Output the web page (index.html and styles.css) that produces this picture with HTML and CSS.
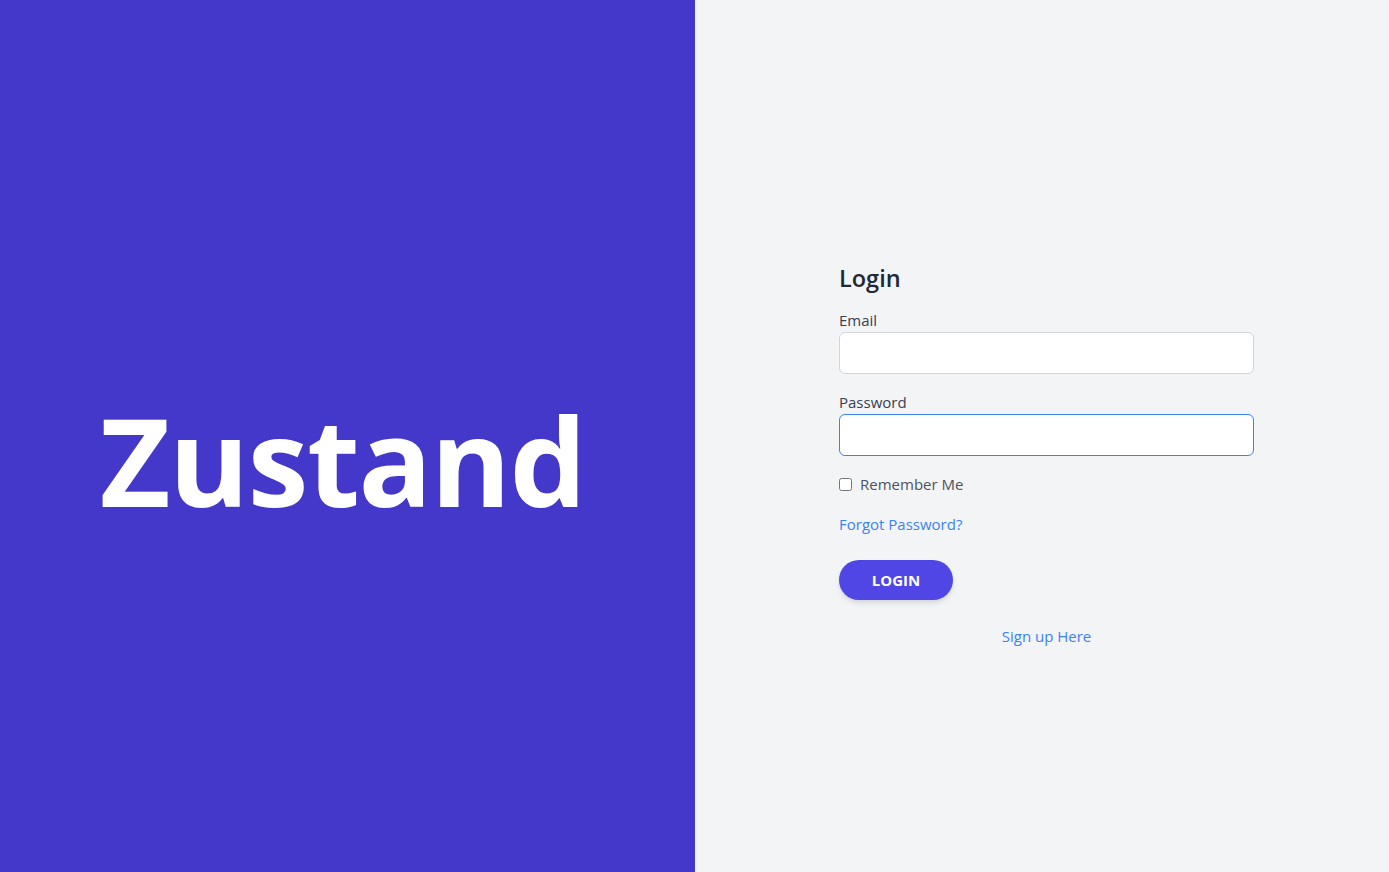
FILE: index.html
```html
<!DOCTYPE html>
<html lang="en">
<head>
<meta charset="utf-8">
<title>Zustand Login</title>
<link rel="stylesheet" href="styles.css">
</head>
<body>
<div class="page">
  <section class="brand">
    <h1 class="brand-title">Zustand</h1>
  </section>
  <section class="auth">
    <form class="login-form" onsubmit="return false">
      <h2 class="login-title">Login</h2>
      <div class="field">
        <label class="field-label" for="email">Email</label>
        <input class="field-input" id="email" type="email">
      </div>
      <div class="field">
        <label class="field-label" for="password">Password</label>
        <input class="field-input field-input--focus" id="password" type="password">
      </div>
      <label class="remember">
        <input class="remember-box" type="checkbox">
        <span>Remember Me</span>
      </label>
      <a class="link forgot" href="#">Forgot Password?</a>
      <button class="login-btn" type="submit">LOGIN</button>
      <div class="signup"><a class="link" href="#">Sign up Here</a></div>
    </form>
  </section>
</div>
</body>
</html>
```

FILE: styles.css
```css
* { box-sizing: border-box; }
html, body { margin: 0; padding: 0; height: 100%; }
body {
  font-family: "Open Sans", "Noto Sans", sans-serif;
  font-size: 15px;
  line-height: 24px;
}
.page {
  display: flex;
  height: 872px;
}
.brand {
  width: 695px;
  flex: none;
  background: #4338ca;
  display: flex;
  align-items: center;
  justify-content: center;
}
.brand-title {
  margin: 0;
  color: #ffffff;
  font-size: 122px;
  font-weight: 700;
  letter-spacing: -1.4px;
  line-height: 1;
  padding-top: 48px;
  padding-right: 10px;
}
.auth {
  flex: 1;
  background: #f3f4f6;
  display: flex;
  align-items: center;
  justify-content: center;
  padding-top: 36px;
  padding-left: 9px;
}
.login-form {
  width: 415px;
  display: flex;
  flex-direction: column;
  align-items: flex-start;
}
.login-title {
  margin: 0 0 12px;
  font-size: 23.5px;
  line-height: 36px;
  font-weight: 600;
  color: #1f2937;
}
.field {
  width: 100%;
  margin-bottom: 16px;
}
.field-label {
  display: block;
  color: #374151;
  line-height: 24px;
}
.field-input {
  display: block;
  width: 100%;
  height: 42px;
  background: #ffffff;
  border: 1px solid #d1d5db;
  border-radius: 6px;
  padding: 8px 12px;
  font: inherit;
  outline: none;
}
.field-input--focus {
  border-color: #3b82f6;
}
.remember {
  display: flex;
  align-items: center;
  color: #4b5563;
  line-height: 24px;
  margin-bottom: 16px;
}
.remember-box {
  width: 13px;
  height: 13px;
  margin: 0 8px 0 0;
}
.link {
  color: #3b82f6;
  text-decoration: none;
}
.forgot {
  line-height: 24px;
  margin-bottom: 24px;
}
.login-btn {
  width: 114px;
  height: 40px;
  border: none;
  border-radius: 9999px;
  background: #4f46e5;
  color: #ffffff;
  font-family: inherit;
  font-size: 15px;
  font-weight: 700;
  box-shadow: 0 4px 6px -1px rgba(0,0,0,0.1), 0 2px 4px -1px rgba(0,0,0,0.06);
  margin-bottom: 24px;
  cursor: pointer;
}
.signup {
  width: 100%;
  text-align: center;
  line-height: 24px;
}
```
